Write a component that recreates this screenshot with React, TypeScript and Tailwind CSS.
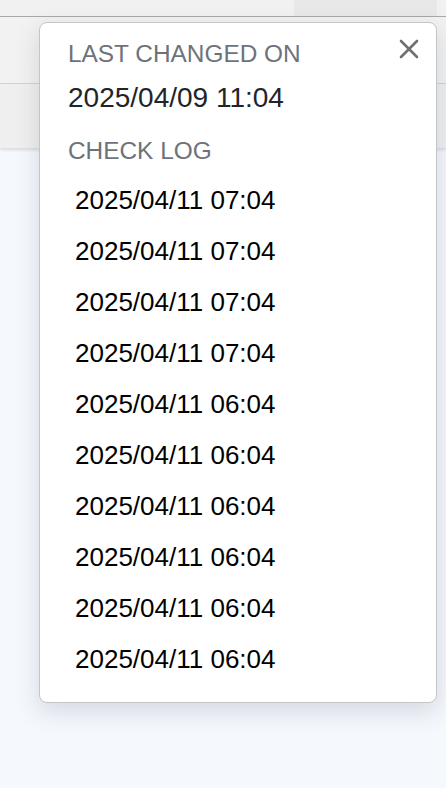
const checkLog = [
  '2025/04/11 07:04',
  '2025/04/11 07:04',
  '2025/04/11 07:04',
  '2025/04/11 07:04',
  '2025/04/11 06:04',
  '2025/04/11 06:04',
  '2025/04/11 06:04',
  '2025/04/11 06:04',
  '2025/04/11 06:04',
  '2025/04/11 06:04',
];

export default function App() {
  return (
    <div className="relative h-[788px] w-[446px] overflow-hidden bg-[#f5f8fd] font-['Liberation_Sans',Arial,sans-serif]">
      <header className="flex flex-col bg-[#f1f1f1] shadow-[0_2px_3px_rgba(0,0,0,0.12)]">
        <div className="flex h-[17px] border-b border-[#a8a8a8]">
          <div className="w-[294px]" />
          <div className="w-[143px] bg-[#e8e8e8]" />
          <div className="flex-1" />
        </div>
        <div className="h-[67px] border-b border-[#d2d2d2] bg-[#f2f2f2]" />
        <div className="h-[64px] bg-[#efefef]" />
      </header>

      <div className="absolute left-[39px] top-[22px] flex w-[398px] flex-col rounded-lg border border-[#c3c5c8] bg-white px-7 pt-[17px] pb-[17px] shadow-[0_8px_24px_rgba(60,70,90,0.18)]">
        <button className="absolute right-[17px] top-[16px] text-[#707070]" aria-label="close">
          <svg width="20" height="20" viewBox="0 0 20 20" fill="none" stroke="currentColor" strokeWidth="2.6" strokeLinecap="round">
            <path d="M2 2 18 18M18 2 2 18" />
          </svg>
        </button>
        <div className="text-[24.4px] leading-[28px] text-[#6c737b]">LAST CHANGED ON</div>
        <div className="mt-[14px] text-[28px] leading-[32px] text-[#212529]">2025/04/09 11:04</div>
        <div className="mt-[23px] text-[24.4px] leading-[28px] text-[#6c737b]">CHECK LOG</div>
        <ul className="mt-[10px] flex flex-col">
          {checkLog.map((t, i) => (
            <li key={i} className="flex h-[51px] items-center pl-[7px] text-[26px] text-black">
              {t}
            </li>
          ))}
        </ul>
      </div>
    </div>
  );
}
